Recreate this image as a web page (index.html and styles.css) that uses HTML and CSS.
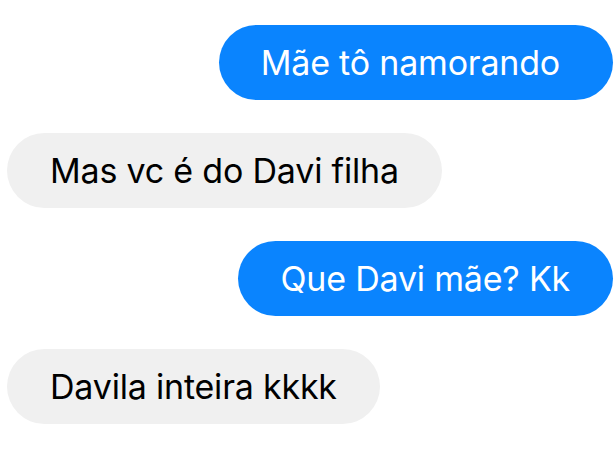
FILE: index.html
```html
<!DOCTYPE html>
<html lang="pt-BR">
<head>
    <meta charset="UTF-8">
    <title>Conversa</title>
    <link rel="stylesheet" href="styles.css">
</head>
<body>
    <div class="chat">
        <div class="msg sent trail">Mãe tô namorando</div>
        <div class="msg received">Mas vc é do Davi filha</div>
        <div class="msg sent">Que Davi mãe? Kk</div>
        <div class="msg received">Davila inteira kkkk</div>
    </div>
</body>
</html>
```

FILE: styles.css
```css
* {
    box-sizing: border-box;
    margin: 0;
    padding: 0;
}
body {
    font-family: Inter, Roboto, 'Liberation Sans', sans-serif;
    background-color: #ffffff;
    width: 614px;
    height: 449px;
    overflow: hidden;
}
.chat {
    display: flex;
    flex-direction: column;
    gap: 33px;
    padding: 25px 1px 0 7px;
}
.msg {
    height: 75px;
    line-height: 75px;
    padding: 0 43px;
    border-radius: 38px;
    font-size: 34px;
    letter-spacing: -0.2px;
    font-variant-ligatures: none;
    white-space: nowrap;
}
.sent {
    align-self: flex-end;
    background-color: #0a84fe;
    color: #ffffff;
}
.sent.trail {
    padding: 0 53px 0 42px;
}
.received {
    align-self: flex-start;
    background-color: #f0f0f0;
    color: #000000;
}
```
